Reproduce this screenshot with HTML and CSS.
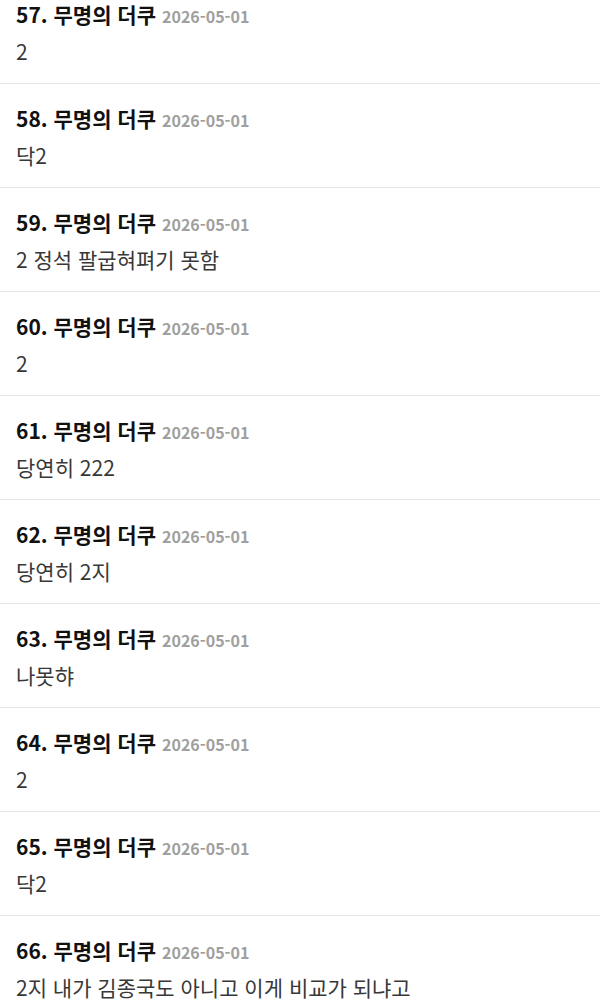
FILE: index.html
```html
<!DOCTYPE html>
<html lang="ko">
<head>
<meta charset="utf-8">
<title>댓글</title>
<link rel="stylesheet" href="styles.css">
</head>
<body>
<ul class="comments">
  <li class="comment"><div class="meta"><span class="author">57. 무명의 더쿠</span><span class="date">2026-05-01</span></div><p class="body">2</p></li>
  <li class="comment"><div class="meta"><span class="author">58. 무명의 더쿠</span><span class="date">2026-05-01</span></div><p class="body">닥2</p></li>
  <li class="comment"><div class="meta"><span class="author">59. 무명의 더쿠</span><span class="date">2026-05-01</span></div><p class="body">2 정석 팔굽혀펴기 못함</p></li>
  <li class="comment"><div class="meta"><span class="author">60. 무명의 더쿠</span><span class="date">2026-05-01</span></div><p class="body">2</p></li>
  <li class="comment"><div class="meta"><span class="author">61. 무명의 더쿠</span><span class="date">2026-05-01</span></div><p class="body">당연히 222</p></li>
  <li class="comment"><div class="meta"><span class="author">62. 무명의 더쿠</span><span class="date">2026-05-01</span></div><p class="body">당연히 2지</p></li>
  <li class="comment"><div class="meta"><span class="author">63. 무명의 더쿠</span><span class="date">2026-05-01</span></div><p class="body">나못햐</p></li>
  <li class="comment"><div class="meta"><span class="author">64. 무명의 더쿠</span><span class="date">2026-05-01</span></div><p class="body">2</p></li>
  <li class="comment"><div class="meta"><span class="author">65. 무명의 더쿠</span><span class="date">2026-05-01</span></div><p class="body">닥2</p></li>
  <li class="comment"><div class="meta"><span class="author">66. 무명의 더쿠</span><span class="date">2026-05-01</span></div><p class="body">2지 내가 김종국도 아니고 이게 비교가 되냐고</p></li>
</ul>
</body>
</html>
```
FILE: styles.css
```css
html, body {
  margin: 0;
  padding: 0;
  background: #fff;
}

body {
  font-family: "Noto Sans CJK KR", "Noto Sans", sans-serif;
  overflow: hidden;
  height: 1007px;
}

.comments {
  list-style: none;
  margin: -20px 0 0;
  padding: 0;
}

.comment {
  display: flex;
  flex-direction: column;
  gap: 7px;
  padding: 19px 16px 17px;
  border-bottom: 1px solid #e5e5e5;
}

.meta {
  display: flex;
  align-items: baseline;
  gap: 6px;
  height: 30px;
  line-height: 30px;
  white-space: nowrap;
}

.author {
  font-size: 21px;
  font-weight: 700;
  color: #111;
}

.date {
  font-size: 16px;
  font-weight: 700;
  color: #a0a0a0;
}

.body {
  margin: 0;
  font-size: 21px;
  line-height: 30px;
  height: 30px;
  color: #383838;
}
```
